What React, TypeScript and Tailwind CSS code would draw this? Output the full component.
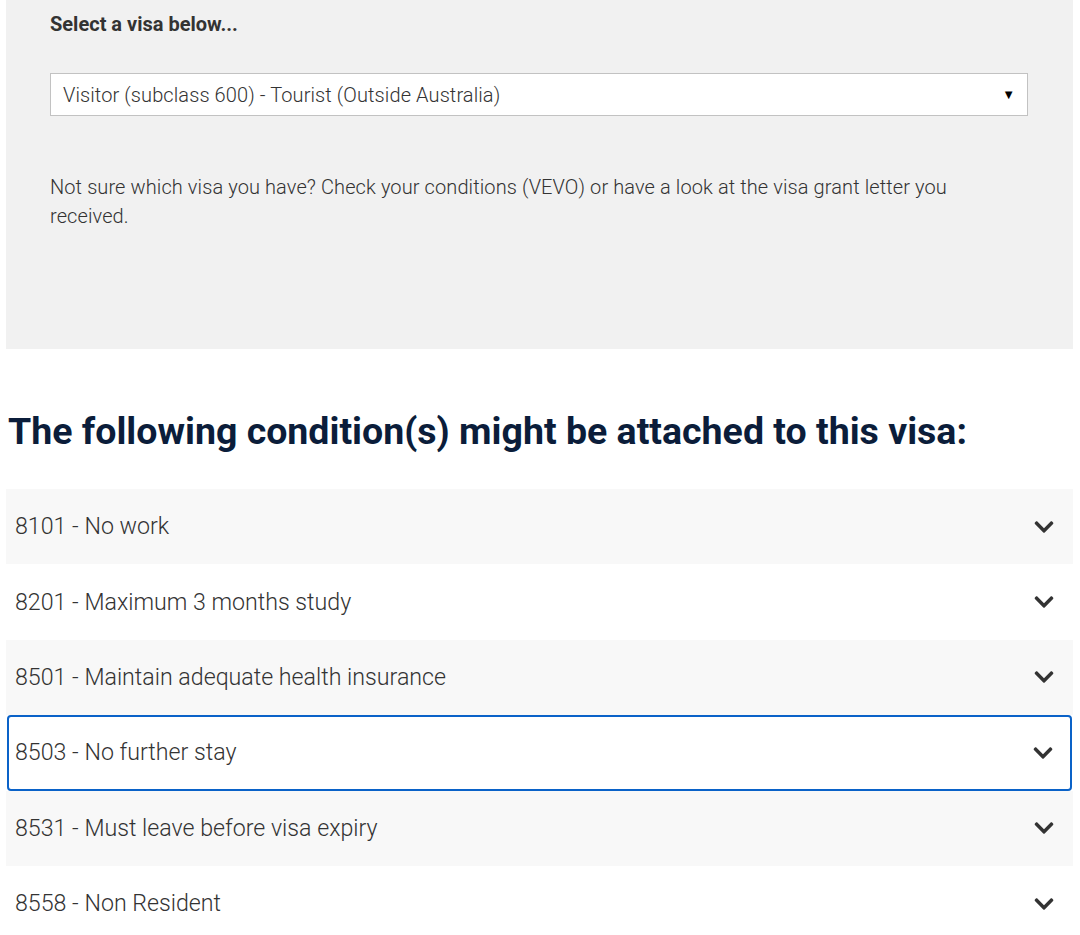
import { FaChevronDown } from 'react-icons/fa'

const condiciones = [
  { code: '8101', label: 'No work' },
  { code: '8201', label: 'Maximum 3 months study' },
  { code: '8501', label: 'Maintain adequate health insurance' },
  { code: '8503', label: 'No further stay' },
  { code: '8531', label: 'Must leave before visa expiry' },
  { code: '8558', label: 'Non Resident' },
]

const focusedIndex = 3

export default function App() {
  return (
    <main className="min-h-[935px] w-[1080px] bg-white font-['Roboto',sans-serif] text-[#333]">
      <section className="ml-[6px] h-[349px] w-[1067px] bg-[#f1f1f1] pl-[44px] pt-[12px]">
        <p className="text-[20px] leading-6 font-bold">Select a visa below...</p>

        <div className="mt-[37px] flex h-[43px] w-[978px] items-center justify-between border border-[#c2c2c2] bg-white pl-[12px] pr-[12px]">
          <span className="text-[20px] tracking-[0.1px] font-light">Visitor (subclass 600) - Tourist (Outside Australia)</span>
          <span className="text-[13px] leading-none text-black">▼</span>
        </div>

        <p className="mt-[57px] w-[930px] text-[20px] leading-[29px] tracking-[0.1px] font-light">
          Not sure which visa you have? Check your conditions (VEVO) or have a look at the visa grant letter you received.
        </p>
      </section>

      <h2 className="mt-[60px] ml-[8px] text-[37.5px] leading-[44px] font-bold text-[#0b1d3a]">
        The following condition(s) might be attached to this visa:
      </h2>

      <ul className="mt-[36px] ml-[6px] w-[1067px]">
        {condiciones.map((c, i) => {
          const shaded = i % 2 === 0
          const focused = i === focusedIndex
          return (
            <li
              key={c.code}
              className={
                focused
                  ? 'mx-[1px] flex h-[75.4px] items-center justify-between rounded-[4px] border-2 border-[#0a62c8] bg-white pl-[6px] pr-[16px]'
                  : shaded
                    ? 'flex h-[75.4px] items-center justify-between bg-[#f8f8f8] pl-[9px] pr-[18px]'
                    : 'flex h-[75.4px] items-center justify-between bg-white pl-[9px] pr-[18px]'
              }
            >
              <span className="text-[23.2px] font-light">
                {c.code} - {c.label}
              </span>
              <FaChevronDown className="h-[22px] w-[22px] text-[#333]" />
            </li>
          )
        })}
      </ul>
    </main>
  )
}
